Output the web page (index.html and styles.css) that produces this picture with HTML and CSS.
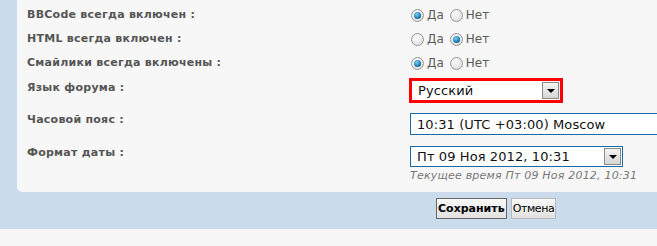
FILE: index.html
```html
<!DOCTYPE html>
<html lang="ru">
<head>
<meta charset="utf-8">
<link rel="stylesheet" href="styles.css">
</head>
<body>
<div class="outer">
  <div class="panel">
    <div class="row radio-row">
      <div class="label">BBCode всегда включен :</div>
      <div class="field">
        <span class="radio checked"></span><span class="opt">Да</span>
        <span class="radio"></span><span class="opt">Нет</span>
      </div>
    </div>
    <div class="row radio-row">
      <div class="label">HTML всегда включен :</div>
      <div class="field">
        <span class="radio"></span><span class="opt">Да</span>
        <span class="radio checked"></span><span class="opt">Нет</span>
      </div>
    </div>
    <div class="row radio-row">
      <div class="label">Смайлики всегда включены :</div>
      <div class="field">
        <span class="radio checked"></span><span class="opt">Да</span>
        <span class="radio"></span><span class="opt">Нет</span>
      </div>
    </div>
    <div class="row row-lang">
      <div class="label label-lang">Язык форума :</div>
      <div class="field">
        <div class="select select-red">
          <span class="select-text">Русский</span>
          <span class="drop"><span class="tri"></span></span>
        </div>
      </div>
    </div>
    <div class="row row-tz">
      <div class="label">Часовой пояс :</div>
      <div class="field">
        <div class="select select-tz">
          <span class="select-text">10:31 (UTC +03:00) Moscow</span>
        </div>
      </div>
    </div>
    <div class="row row-date">
      <div class="label">Формат даты :</div>
      <div class="field">
        <div class="select select-date">
          <span class="select-text">Пт 09 Ноя 2012, 10:31</span>
          <span class="drop"><span class="tri"></span></span>
        </div>
        <div class="hint">Текущее время Пт 09 Ноя 2012, 10:31</div>
      </div>
    </div>
  </div>
  <div class="buttons">
    <button class="btn btn-main">Сохранить</button>
    <button class="btn btn-cancel">Отмена</button>
  </div>
</div>
</body>
</html>
```
FILE: styles.css
```css
html, body {
  margin: 0;
  padding: 0;
}
body {
  background: #f7f7f7;
  font-family: "DejaVu Sans", Verdana, sans-serif;
  height: 246px;
  overflow: hidden;
}
.outer {
  background: #cadcec;
  padding-left: 17px;
}
.panel {
  background: #f7f7f7;
  border-bottom-left-radius: 5px;
  padding-top: 3px;
  padding-bottom: 9px;
}
.row {
  display: grid;
  grid-template-columns: 393px 1fr;
}
.label {
  padding-left: 10px;
  font-size: 11px;
  font-weight: bold;
  color: #555;
  line-height: 14px;
  letter-spacing: 0.25px;
}
.radio-row {
  height: 24px;
  align-items: center;
}
.field {
  display: flex;
  align-items: center;
  flex-wrap: wrap;
}
.radio {
  box-sizing: border-box;
  width: 13px;
  height: 13px;
  border-radius: 50%;
  border: 1px solid #979797;
  background: radial-gradient(circle at 40% 35%, #fdfdfd 0, #e6e6e6 60%, #cfcfcf 100%);
  margin-left: 1px;
  position: relative;
}
.radio.checked::after {
  content: "";
  position: absolute;
  left: 2px;
  top: 2px;
  width: 7px;
  height: 7px;
  border-radius: 50%;
  background: radial-gradient(circle at 40% 35%, #7fd0f5 0, #1c82b8 55%, #0b3e66 100%);
}
.opt {
  font-size: 12px;
  color: #5a5a5a;
  margin-left: 3px;
  margin-right: 5px;
}
.row-lang {
  margin-top: 3px;
}
.label-lang {
  padding-top: 3px;
}
.select {
  box-sizing: border-box;
  display: flex;
  align-items: center;
  background: #fff;
  color: #111;
  font-size: 13px;
  position: relative;
}
.select-text {
  white-space: nowrap;
  letter-spacing: 0.1px;
}
.select-red {
  border: 3px solid #ff0000;
  width: 154px;
  height: 25px;
  margin-left: -1px;
  padding-left: 6px;
}
.select-tz {
  border: 1px solid #1a6aa8;
  width: 260px;
  height: 22px;
  padding-left: 6px;
}
.row-tz {
  margin-top: 10px;
}
.row-date {
  margin-top: 11px;
}
.select-date {
  border: 1px solid #1a6aa8;
  width: 213px;
  height: 21px;
  padding-left: 6px;
}
.drop {
  position: absolute;
  right: 1px;
  top: 1px;
  box-sizing: border-box;
  width: 17px;
  height: 17px;
  border: 1px solid #8a8a8a;
  background: linear-gradient(#f4f4f4, #d6d6d6);
  display: flex;
  align-items: center;
  justify-content: center;
}
.tri {
  width: 0;
  height: 0;
  border-left: 4px solid transparent;
  border-right: 4px solid transparent;
  border-top: 4px solid #000;
  margin-top: 1px;
}
.hint {
  flex-basis: 100%;
  margin-top: 2px;
  font-size: 11px;
  font-style: italic;
  color: #777;
  line-height: 14px;
  white-space: nowrap;
  letter-spacing: 0.2px;
}
.buttons {
  height: 37px;
  box-sizing: border-box;
  padding-top: 6px;
  padding-left: 419px;
  display: flex;
  align-items: flex-start;
  gap: 4px;
}
.btn {
  font-family: "DejaVu Sans", Verdana, sans-serif;
  font-size: 11px;
  height: 21px;
  padding: 0 1px;
  margin: 0;
  color: #000;
  background: linear-gradient(#fbfbfb, #e0e0e0);
  line-height: 19px;
}
.btn-main {
  font-weight: bold;
  border: 1px solid #666;
}
.btn-cancel {
  border: 1px solid #b8b8b8;
  letter-spacing: -0.4px;
}
```
